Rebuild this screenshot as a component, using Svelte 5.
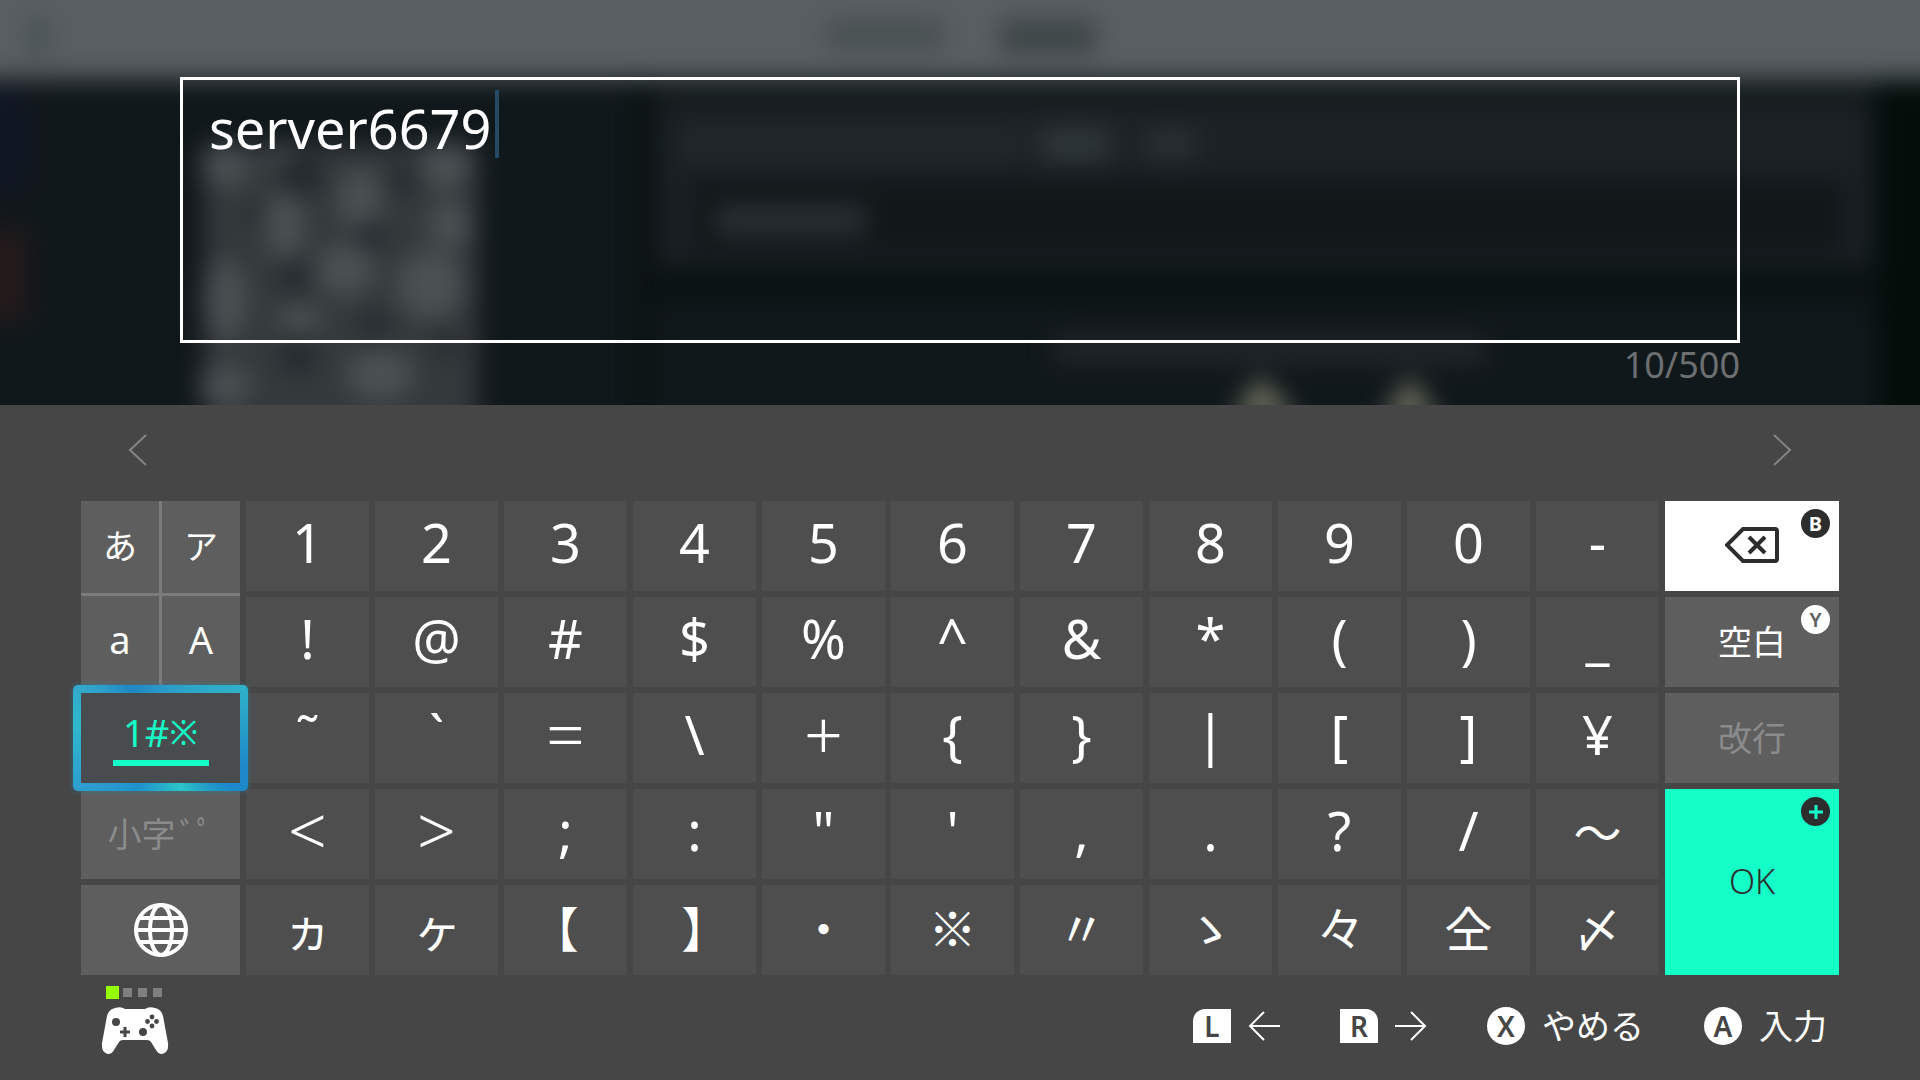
<script lang="ts">
	let text = "server6679";
	let mode = "symbols";
	const maxLength = 500;

	const rows = [
		["1", "2", "3", "4", "5", "6", "7", "8", "9", "0", "-"],
		["!", "@", "#", "$", "%", "^", "&", "*", "(", ")", "_"],
		["˜", "`", "=", "\\", "+", "{", "}", "|", "[", "]", "¥"],
		["<", ">", ";", ":", '"', "'", ",", ".", "?", "/", "〜"],
		["ヵ", "ヶ", "【", "】", "・", "※", "〃", "ゝ", "々", "仝", "〆"],
	];
	const wideKeys = "<>=+";
	const kanaKeys = "〜ヵヶ【】・※〃ゝ々仝〆";

	const tabs = [
		{ id: "hiragana", label: "あ", kana: true },
		{ id: "katakana", label: "ア", kana: true },
		{ id: "lower", label: "a", kana: false },
		{ id: "upper", label: "A", kana: false },
	];

	// light and dark patches of the QR code behind the text box
	const patches = [
		[225, 165, 24, 22], [285, 155, 18, 12], [360, 200, 22, 32], [445, 165, 26, 24],
		[285, 225, 20, 36], [450, 225, 22, 24], [225, 300, 22, 40], [345, 270, 30, 26],
		[430, 285, 34, 34], [225, 385, 26, 20], [380, 375, 34, 26], [300, 320, 24, 14],
	];
	const holes = [
		[300, 175, 22], [370, 235, 14], [295, 275, 16], [375, 325, 14],
		[298, 355, 18], [405, 180, 14], [445, 345, 12], [255, 215, 10],
	];

	function type(char: string): void {
		if (text.length < maxLength) {
			text += char;
		}
	}

	function erase(): void {
		text = text.slice(0, -1);
	}
</script>

<main>
	<section class="entry">
		<svg class="backdrop" viewBox="0 0 1920 405" preserveAspectRatio="none" aria-hidden="true">
			<defs>
				<filter id="soft" x="-20%" y="-20%" width="140%" height="140%" color-interpolation-filters="sRGB">
					<feGaussianBlur stdDeviation="12" />
				</filter>
			</defs>
			<rect width="1920" height="405" fill="#11181b" />
			<g filter="url(#soft)">
				<rect x="660" y="60" width="1210" height="205" fill="#1b2124" />
				<rect x="690" y="178" width="1155" height="75" fill="#12171a" />
				<rect x="635" y="268" width="1240" height="34" fill="#0b1212" />
				<rect x="632" y="80" width="20" height="360" fill="#0b1212" />
				<rect x="652" y="80" width="1223" height="22" fill="#12191a" />
				<rect x="1878" y="60" width="80" height="400" fill="#040d0a" />
				<rect x="-40" y="230" width="66" height="90" fill="#251a1b" />
				<rect x="-40" y="90" width="66" height="100" fill="#111625" />
				<rect x="680" y="130" width="340" height="28" fill="#22282b" />
				<rect x="1040" y="128" width="70" height="32" fill="#30373b" />
				<rect x="1145" y="130" width="50" height="28" fill="#2a3034" />
				<rect x="715" y="205" width="150" height="30" fill="#2a2f33" />
				<rect x="1055" y="335" width="430" height="28" fill="#21262a" />
				<path d="M1230 420l30-45 40 45zM1380 420l30-45 30 45z" fill="#66695a" />
				<rect x="-40" y="-60" width="2000" height="139" fill="#585e61" />
				<rect x="825" y="18" width="120" height="34" fill="#4a5153" />
				<rect x="1000" y="20" width="96" height="34" fill="#3e4547" />
				<rect x="28" y="18" width="20" height="38" fill="#485052" />
			</g>
			<g filter="url(#soft)">
				<rect x="204" y="145" width="274" height="300" fill="#34393c" />
				{#each patches as [cx, cy, rx, ry]}
					<ellipse {cx} {cy} {rx} {ry} fill="#4b5053" />
				{/each}
				{#each holes as [cx, cy, r]}
					<circle {cx} {cy} {r} fill="#22282b" />
				{/each}
			</g>
		</svg>

		<div class="field">
			<textarea aria-label="テキスト" maxlength={maxLength} rows="1" spellcheck="false" bind:value={text}></textarea>
			<span class="caret"></span>
		</div>
		<p class="counter">{text.length}/{maxLength}</p>
	</section>

	<section class="panel">
		<div class="candidates">
			<button aria-label="前の候補">
				<svg width="20" height="34" viewBox="0 0 20 34"><path d="M18 2L2 17l16 15" /></svg>
			</button>
			<button aria-label="次の候補">
				<svg width="20" height="34" viewBox="0 0 20 34"><path d="M2 2l16 15L2 32" /></svg>
			</button>
		</div>

		<div class="keyboard">
			<div class="column">
				<div class="tabs">
					{#each tabs as tab}
						<button class="tab" class:kana={tab.kana} on:click={() => (mode = tab.id)}>{tab.label}</button>
					{/each}
				</div>
				<button class="symbols" class:selected={mode === "symbols"} on:click={() => (mode = "symbols")}>
					<span class="symbols-label">1#<span class="mark">※</span></span>
				</button>
				<button class="side" disabled>小字<span class="voicing">ﾞﾟ</span></button>
				<button class="side globe-key" aria-label="言語">
					<svg class="globe" width="56" height="56" viewBox="0 0 56 56">
						<circle cx="28" cy="28" r="25" />
						<ellipse cx="28" cy="28" rx="11" ry="25" />
						<path d="M3 28h50M7 16h42M7 40h42" />
					</svg>
				</button>
			</div>

			<div class="keys">
				{#each rows as row}
					{#each row as char}
						<button
							class="key"
							class:wide={wideKeys.includes(char)}
							class:kana={kanaKeys.includes(char)}
							on:click={() => type(char)}>{char}</button
						>
					{/each}
				{/each}
			</div>

			<div class="column">
				<button class="side erase" aria-label="削除" on:click={erase}>
					<svg width="54" height="36" viewBox="0 0 54 36">
						<path class="outline" d="M18 2h32q2 0 2 2v28q0 2-2 2H18L2 18z" />
						<path class="cross" d="M24 10l16 16M40 10L24 26" />
					</svg>
					<span class="badge dark">B</span>
				</button>
				<button class="side" on:click={() => type(" ")}>
					空白
					<span class="badge light">Y</span>
				</button>
				<button class="side" disabled>改行</button>
				<button class="side ok">
					OK
					<span class="badge dark">
						<svg width="14" height="14" viewBox="0 0 14 14"><path d="M7 0v14M0 7h14" /></svg>
					</span>
				</button>
			</div>
		</div>

		<footer>
			<div class="player">
				<div class="lamps">
					<span class="lamp on"></span>
					<span class="lamp"></span>
					<span class="lamp"></span>
					<span class="lamp"></span>
				</div>
				<svg width="68" height="48" viewBox="0 0 68 48" aria-hidden="true">
					<path
						fill="#fff"
						d="M14 1Q20-1 24 2H44Q48-1 54 1Q60 2 62 9L67 36Q68 46 61 47Q57 47 55 43L50 35Q49 33 46 33H22Q19 33 18 35L13 43Q11 47 7 47Q0 46 1 36L6 9Q8 2 14 1Z"
					/>
					<g fill="#464646">
						<circle cx="15" cy="15" r="4" />
						<circle cx="42" cy="25" r="4" />
						<circle cx="51" cy="10" r="2.4" />
						<circle cx="51" cy="19" r="2.4" />
						<circle cx="46.5" cy="14.5" r="2.4" />
						<circle cx="55.5" cy="14.5" r="2.4" />
						<path d="M22.5 20h3v3.5H29v3h-3.5V30h-3v-3.5H19v-3h3.5z" />
					</g>
				</svg>
			</div>

			<div class="hints">
				<button class="hint" aria-label="左へ">
					<span class="shoulder left">L</span>
					<svg class="arrow" width="32" height="30" viewBox="0 0 32 30"><path d="M16 1L2 15l14 14M2 15h30" /></svg>
				</button>
				<button class="hint" aria-label="右へ">
					<span class="shoulder right">R</span>
					<svg class="arrow" width="32" height="30" viewBox="0 0 32 30"><path d="M16 1l14 14-14 14M30 15H0" /></svg>
				</button>
				<button class="hint"><span class="round">X</span>やめる</button>
				<button class="hint"><span class="round">A</span>入力</button>
			</div>
		</footer>
	</section>
</main>

<style>
	:global(body) {
		margin: 0;
		background: #464646;
	}

	main {
		display: flex;
		flex-direction: column;
		min-height: 100vh;
		color: #fff;
		font-family: "Noto Sans", "Noto Sans CJK JP", sans-serif;
		font-weight: 400;
	}

	button {
		display: flex;
		align-items: center;
		justify-content: center;
		margin: 0;
		padding: 0;
		border: 0;
		background: none;
		color: inherit;
		font: inherit;
		cursor: pointer;
	}

	svg {
		display: block;
		fill: none;
	}

	.entry {
		position: relative;
		padding: 77px 180px 18px;
		overflow: hidden;
	}

	.backdrop {
		position: absolute;
		inset: 0;
		width: 100%;
		height: 100%;
	}

	.field {
		position: relative;
		display: flex;
		align-items: flex-start;
		box-sizing: border-box;
		height: 266px;
		padding: 10px 26px;
		border: 3px solid #fff;
	}

	textarea {
		field-sizing: content;
		max-width: 100%;
		margin: 0;
		padding: 4px 4px 0 0;
		border: 0;
		outline: 0;
		background: none;
		color: #fff;
		font: inherit;
		font-size: 54px;
		line-height: 68px;
		resize: none;
		overflow: hidden;
	}

	.caret {
		width: 4px;
		height: 68px;
		background: #264a66;
	}

	.counter {
		position: relative;
		margin: 0;
		color: #6b6f71;
		font-size: 36px;
		line-height: 44px;
		text-align: right;
	}

	.panel {
		display: flex;
		flex: 1;
		flex-direction: column;
		background: #464646;
	}

	.candidates {
		display: flex;
		align-items: center;
		justify-content: space-between;
		box-sizing: border-box;
		height: 96px;
		padding: 0 128px 6px;
	}

	.candidates path {
		stroke: #858585;
		stroke-width: 2;
	}

	.keyboard {
		display: grid;
		grid-template-columns: 159px 1fr 174px;
		gap: 6px;
		padding: 0 81px;
	}

	.column,
	.keys {
		display: grid;
		grid-template-rows: repeat(5, 90px);
		gap: 6px;
	}

	.keys {
		grid-template-columns: repeat(11, 1fr);
	}

	.key {
		padding-bottom: 8px;
		background: #4e4e4e;
		font-size: 54px;
		line-height: 80px;
	}

	.key.wide {
		font-size: 68px;
		font-weight: 300;
	}

	.key.kana {
		font-family: "Noto Sans CJK JP", sans-serif;
		font-feature-settings: "palt";
		font-size: 48px;
	}

	.tabs {
		display: grid;
		grid-row: span 2;
		grid-template-columns: 1fr 1fr;
		grid-template-rows: 1fr 1fr;
		gap: 3px;
		background: #7b7b7b;
	}

	.tab {
		padding-bottom: 4px;
		background: #5e5e5e;
		font-size: 38px;
	}

	.tab.kana {
		font-family: "Noto Sans CJK JP", sans-serif;
		font-size: 34px;
	}

	.side {
		position: relative;
		padding-bottom: 4px;
		background: #5e5e5e;
		font-size: 34px;
	}

	.side:disabled {
		color: #8b8b8b;
		cursor: default;
	}

	.voicing {
		margin-left: 4px;
	}

	.symbols {
		background: #5e5e5e;
		font-size: 38px;
		line-height: 44px;
	}

	/* the focus frame sits outside the key */
	.symbols.selected {
		z-index: 1;
		margin: -8px;
		border: 8px solid transparent;
		border-radius: 5px;
		background:
			linear-gradient(#484c4f, #484c4f) padding-box,
			conic-gradient(
				#2b98c9,
				#2fb0c8 59deg,
				#1d88c9 110deg,
				#1d88c9 125deg,
				#2cc5c9 157deg,
				#2090cc 205deg,
				#2f9fd0 240deg,
				#2fb8cc 280deg,
				#33a8cc 302deg,
				#1f88c4 328deg,
				#2b98c9
			) border-box;
		box-shadow: 0 0 5px rgba(32, 150, 180, 0.5);
		color: #14ffc8;
	}

	.symbols-label {
		display: flex;
		align-items: center;
		justify-content: center;
		width: 96px;
		padding-bottom: 6px;
		border-bottom: 6px solid transparent;
	}

	.selected .symbols-label {
		border-color: #14ffc8;
	}

	.mark {
		font-size: 34px;
	}

	.globe-key {
		padding-bottom: 0;
	}

	.globe {
		stroke: #fff;
		stroke-width: 4;
	}

	.erase {
		padding-bottom: 2px;
		background: #fff;
	}

	.outline,
	.cross {
		stroke: #2d2d2d;
		stroke-width: 4;
	}

	.ok {
		grid-row: span 2;
		padding-bottom: 2px;
		background: #14ffc8;
		color: #2d2d2d;
		font-weight: 300;
	}

	.badge {
		position: absolute;
		top: 8px;
		right: 9px;
		display: flex;
		align-items: center;
		justify-content: center;
		width: 29px;
		height: 29px;
		border-radius: 50%;
		font-size: 20px;
		line-height: 28px;
	}

	.badge.dark {
		background: #2d2d2d;
		color: #fff;
		font-weight: 700;
	}

	.badge.light {
		background: #fff;
		color: #5e5e5e;
		font-weight: 600;
	}

	.badge path {
		stroke: #14ffc8;
		stroke-width: 3;
	}

	footer {
		display: flex;
		align-items: flex-start;
		justify-content: space-between;
		padding: 11px 93px 24px 101px;
	}

	.lamps {
		display: flex;
		align-items: center;
		gap: 6px;
		margin-bottom: 8px;
		padding-left: 5px;
	}

	.lamp {
		width: 9px;
		height: 9px;
		background: #808080;
	}

	.lamp.on {
		width: 13px;
		height: 13px;
		margin-right: -2px;
		background: #96ff00;
	}

	.hints {
		display: flex;
		gap: 60px;
		padding-top: 16px;
	}

	.hint {
		gap: 17px;
		font-size: 34px;
		line-height: 48px;
	}

	.shoulder,
	.round {
		width: 38px;
		background: #fff;
		color: #464646;
		font-size: 28px;
		font-weight: 600;
		text-align: center;
	}

	.shoulder {
		height: 34px;
		line-height: 34px;
	}

	.left {
		border-top-left-radius: 12px;
	}

	.right {
		border-top-right-radius: 12px;
	}

	.round {
		height: 38px;
		border-radius: 50%;
		line-height: 38px;
	}

	.arrow {
		stroke: #fff;
		stroke-width: 2;
	}
</style>
